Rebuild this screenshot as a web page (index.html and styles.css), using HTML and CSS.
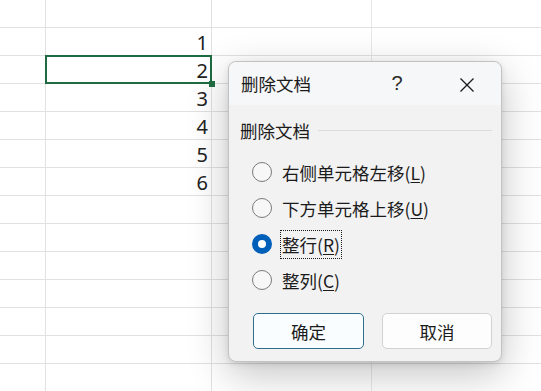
FILE: index.html
```html
<!DOCTYPE html>
<html lang="zh">
<head>
    <meta charset="utf-8">
    <title>删除文档</title>
    <link rel="stylesheet" href="styles.css">
</head>
<body>
    <div class="sheet">
        <div class="row"><div class="cell colA"></div><div class="cell colB"></div><div class="cell colC"></div><div class="cell colD"></div></div>
        <div class="row"><div class="cell colA"></div><div class="cell colB num">1</div><div class="cell colC"></div><div class="cell colD"></div></div>
        <div class="row"><div class="cell colA"></div><div class="cell colB num selected">2<span class="handle"></span></div><div class="cell colC"></div><div class="cell colD"></div></div>
        <div class="row"><div class="cell colA"></div><div class="cell colB num">3</div><div class="cell colC"></div><div class="cell colD"></div></div>
        <div class="row"><div class="cell colA"></div><div class="cell colB num">4</div><div class="cell colC"></div><div class="cell colD"></div></div>
        <div class="row"><div class="cell colA"></div><div class="cell colB num">5</div><div class="cell colC"></div><div class="cell colD"></div></div>
        <div class="row"><div class="cell colA"></div><div class="cell colB num">6</div><div class="cell colC"></div><div class="cell colD"></div></div>
        <div class="row"><div class="cell colA"></div><div class="cell colB"></div><div class="cell colC"></div><div class="cell colD"></div></div>
        <div class="row"><div class="cell colA"></div><div class="cell colB"></div><div class="cell colC"></div><div class="cell colD"></div></div>
        <div class="row"><div class="cell colA"></div><div class="cell colB"></div><div class="cell colC"></div><div class="cell colD"></div></div>
        <div class="row"><div class="cell colA"></div><div class="cell colB"></div><div class="cell colC"></div><div class="cell colD"></div></div>
        <div class="row"><div class="cell colA"></div><div class="cell colB"></div><div class="cell colC"></div><div class="cell colD"></div></div>
        <div class="row"><div class="cell colA"></div><div class="cell colB"></div><div class="cell colC"></div><div class="cell colD"></div></div>
        <div class="row"><div class="cell colA"></div><div class="cell colB"></div><div class="cell colC"></div><div class="cell colD"></div></div>
    </div>

    <div class="dialog">
        <div class="titlebar">
            <span class="title">删除文档</span>
            <span class="help">?</span>
            <span class="close">
                <svg width="16" height="16" viewBox="0 0 16 16"><path d="M1.5 1.5 L14.5 14.5 M14.5 1.5 L1.5 14.5" stroke="#1a1a1a" stroke-width="1.3" fill="none"/></svg>
            </span>
        </div>
        <div class="group-label">
            <span>删除文档</span>
            <span class="rule"></span>
        </div>
        <div class="options">
            <div class="option"><span class="radio"></span><span class="label">右侧单元格左移(<u>L</u>)</span></div>
            <div class="option"><span class="radio"></span><span class="label">下方单元格上移(<u>U</u>)</span></div>
            <div class="option"><span class="radio checked"></span><span class="label focus">整行(<u>R</u>)</span></div>
            <div class="option"><span class="radio"></span><span class="label">整列(<u>C</u>)</span></div>
        </div>
        <div class="buttons">
            <button class="btn primary">确定</button>
            <button class="btn">取消</button>
        </div>
    </div>
</body>
</html>
```

FILE: styles.css
```css
html, body {
    margin: 0;
    padding: 0;
    background: #ffffff;
    overflow: hidden;
}

* {
    box-sizing: border-box;
}

/* spreadsheet background */
.sheet {
    width: 541px;
}
.row {
    display: flex;
    height: 28px;
    border-bottom: 1px solid #e1e1e1;
}
.cell {
    height: 100%;
    border-right: 1px solid #e1e1e1;
}
.colA {
    width: 46px;
}
.colB {
    width: 166px;
}
.colC {
    width: 160px;
    border-right-color: #e8e8e8;
}
.colD {
    flex: 1;
    border-right: 0;
}
.num {
    font-family: "Noto Sans", "Liberation Sans", sans-serif;
    font-size: 20px;
    line-height: 27px;
    color: #222222;
    text-align: right;
    padding-right: 3px;
    padding-top: 1px;
}
.selected {
    position: relative;
}
.selected::after {
    content: "";
    position: absolute;
    left: -1px;
    top: -1px;
    right: -1px;
    bottom: -1px;
    border: 2px solid #1e6b41;
}
.handle {
    position: absolute;
    right: -4px;
    bottom: -4px;
    width: 6px;
    height: 6px;
    background: #1e6b41;
    z-index: 1;
}

/* dialog */
.dialog {
    position: absolute;
    left: 228px;
    top: 61px;
    width: 274px;
    height: 301px;
    background: #f2f2f2;
    border: 1px solid #c2c2c2;
    border-radius: 8px;
    box-shadow: 0 12px 40px rgba(0, 0, 0, 0.24), 0 2px 6px rgba(0, 0, 0, 0.10);
    font-family: "Noto Sans CJK SC", "Noto Sans", sans-serif;
    color: #1b1b1b;
}
.titlebar {
    display: flex;
    align-items: center;
    height: 43px;
    padding-left: 12px;
    padding-right: 11px;
    background: #f6f7f8;
    border-radius: 8px 8px 0 0;
}
.title {
    flex: 1;
    font-size: 17.5px;
}
.help {
    width: 46px;
    text-align: center;
    font-family: "Liberation Sans", sans-serif;
    font-size: 20px;
    color: #2a2a2a;
    margin-right: 24px;
}
.close {
    width: 46px;
    display: flex;
    justify-content: center;
    padding-top: 2px;
}

.group-label {
    display: flex;
    align-items: center;
    height: 24px;
    margin-top: 13px;
    padding-left: 11px;
    padding-right: 9px;
    font-size: 17.5px;
}
.rule {
    flex: 1;
    height: 1px;
    background: #dcdcdc;
    margin-left: 8px;
}

.options {
    margin-top: 12px;
}
.option {
    display: flex;
    align-items: center;
    height: 36px;
    padding-left: 23px;
}
.radio {
    width: 20px;
    height: 20px;
    border-radius: 50%;
    border: 1px solid #7a7a7a;
    background: #f7f7f7;
    margin-right: 8px;
    flex-shrink: 0;
}
.radio.checked {
    border: 6px solid #005fb8;
    background: #ffffff;
}
.label {
    font-size: 17.5px;
    line-height: 27px;
    padding: 0 1px;
    border: 1px dotted transparent;
}
.label.focus {
    border-color: #1a1a1a;
}
.label u {
    text-underline-offset: 2px;
}

.buttons {
    display: flex;
    gap: 18px;
    margin-top: 15px;
    padding-left: 24px;
}
.btn {
    width: 110px;
    height: 36px;
    font-family: "Noto Sans CJK SC", sans-serif;
    font-size: 17.5px;
    color: #1b1b1b;
    background: #fdfdfd;
    border: 1px solid #d2d2d2;
    border-radius: 5px;
    padding: 0;
}
.btn.primary {
    width: 111px;
    background: #f9fdff;
    border-color: #2f6f8c;
}
```
